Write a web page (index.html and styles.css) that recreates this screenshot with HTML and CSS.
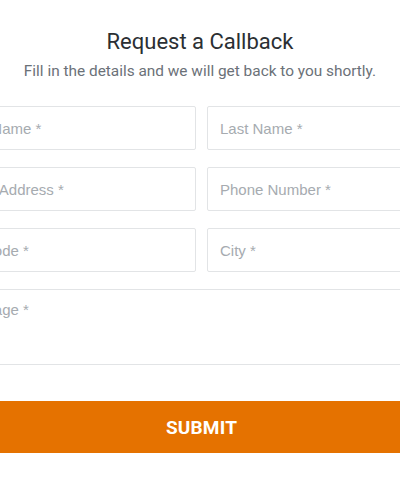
FILE: index.html
```html
<!DOCTYPE html>
<html>
<head>
<meta charset="utf-8">
<link rel="stylesheet" href="styles.css">
</head>
<body>
<section class="callback">
  <h2 class="title">Request a Callback</h2>
  <p class="subtitle">Fill in the details and we will get back to you shortly.</p>
  <form class="form">
    <div class="grid">
      <input class="field" type="text" placeholder="First Name *">
      <input class="field" type="text" placeholder="Last Name *">
      <input class="field" type="text" placeholder="Email Address *">
      <input class="field" type="text" placeholder="Phone Number *">
      <input class="field" type="text" placeholder="Zip Code *">
      <input class="field" type="text" placeholder="City *">
    </div>
    <textarea class="field message" placeholder="Message *"></textarea>
    <button class="submit" type="button">SUBMIT</button>
  </form>
</section>
</body>
</html>
```
FILE: styles.css
```css
html, body {
  margin: 0;
  padding: 0;
  background: #fff;
  overflow: hidden;
}
body {
  font-family: Roboto, "Liberation Sans", sans-serif;
}
.callback {
  padding-top: 28px;
}
.title {
  margin: 0;
  text-align: center;
  font-weight: 400;
  font-size: 22px;
  line-height: 28px;
  color: #2b2f33;
}
.subtitle {
  margin: 5px 0 0;
  text-align: center;
  font-size: 15.4px;
  line-height: 20px;
  color: #6b7178;
}
.form {
  width: 513px;
  margin: 25px 0 0 -55px;
}
.grid {
  display: grid;
  grid-template-columns: 1fr 1fr;
  column-gap: 11px;
  row-gap: 17px;
}
.field {
  box-sizing: border-box;
  height: 44px;
  border: 1px solid #e2e4e6;
  border-radius: 2px;
  padding: 0 12px;
  font-family: "Liberation Sans", Arial, sans-serif;
  font-size: 15px;
  color: #333;
  background: #fff;
  outline: none;
  width: 100%;
}
.field::placeholder {
  color: #a6abb0;
}
.message {
  display: block;
  margin-top: 17px;
  height: 76px;
  padding: 11px 12px;
  line-height: 18px;
  resize: none;
}
.submit {
  display: block;
  margin-top: 36px;
  width: 100%;
  height: 52px;
  border: 0;
  background: #e57200;
  color: #fff;
  font-family: Roboto, "Liberation Sans", sans-serif;
  font-weight: 700;
  font-size: 19px;
  letter-spacing: 0.2px;
}
```
